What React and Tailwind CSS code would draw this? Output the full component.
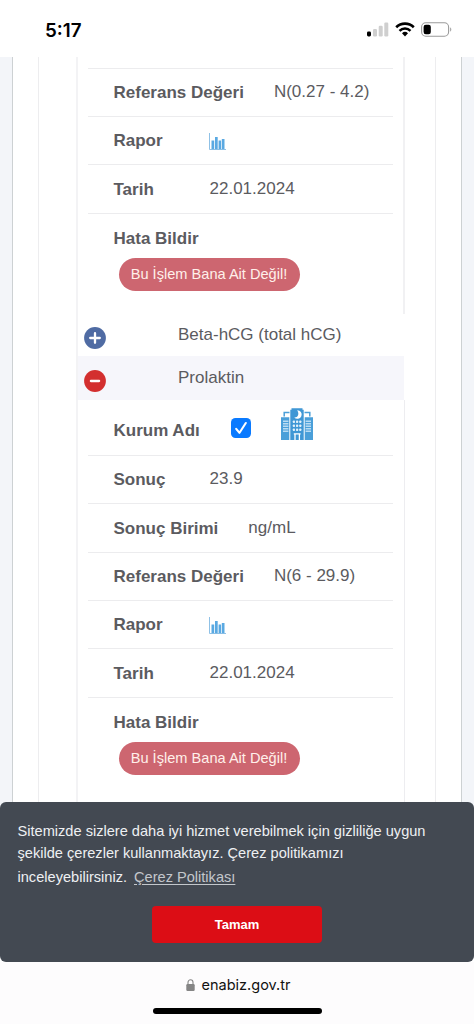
import React from 'react'

const StatusBar = () => (
  <header className="flex h-[57px] items-start justify-between bg-white pl-[45px] pr-[22px] pt-[19px]">
    <span className="font-['Inter',sans-serif] text-[18.8px] font-semibold leading-[23px] text-black">5:17</span>
    <div className="flex items-center gap-[6px] pt-[3px]">
      {/* Signal */}
      <svg width="22" height="15" viewBox="0 0 22 15">
        <rect x="0" y="9.5" width="4" height="5" rx="1.4" fill="#000" />
        <rect x="6" y="7" width="4" height="7.5" rx="1.2" fill="#cfcfcf" />
        <rect x="11.7" y="3.8" width="4" height="10.7" rx="1.2" fill="#cfcfcf" />
        <rect x="17.3" y="0.5" width="4" height="14" rx="1.2" fill="#cfcfcf" />
      </svg>
      {/* Wifi */}
      <svg width="20" height="15" viewBox="0 0 20 15" fill="none" stroke="#000">
        <path d="M1.2 5.2a12.6 12.6 0 0 1 17.6 0" strokeWidth="2.6" />
        <path d="M4.5 8.8a7.9 7.9 0 0 1 11 0" strokeWidth="2.5" />
        <path d="M10 14.4l3-3.1a4.3 4.3 0 0 0-6 0z" fill="#000" stroke="none" />
      </svg>
      {/* Battery */}
      <svg width="31" height="15" viewBox="0 0 31 15">
        <rect x="0.6" y="0.8" width="27" height="13.4" rx="4.2" fill="#fff" stroke="#9b9b9b" strokeWidth="1.1" />
        <rect x="2.6" y="2.7" width="7.2" height="9.6" rx="2.2" fill="#000" />
        <path d="M29.2 5.3c1.5.7 1.5 3.7 0 4.4z" fill="#9b9b9b" />
      </svg>
    </div>
  </header>
)

const ChartIcon = () => (
  <svg width="18" height="18" viewBox="0 0 18 18">
    <path d="M.5 0v16.5H17" fill="none" stroke="#8fc1e6" strokeWidth="1" />
    <g fill="#5aa9e2">
      <rect x="2.5" y="7.5" width="2.7" height="8.6" />
      <rect x="6" y="4" width="2.7" height="12.1" />
      <rect x="9.6" y="7.5" width="2.5" height="8.6" />
      <rect x="12.8" y="6" width="2.7" height="10.1" />
    </g>
  </svg>
)

const HospitalIcon = () => (
  <svg width="32" height="33" viewBox="0 0 32 33">
    <path d="M3.2 8.5V4.6H8.5M28.8 8.5V4.6H23.5" fill="none" stroke="#4a9fd9" strokeWidth="1.5" />
    <path d="M0 9.2h8.3V32H0zM23.7 9.2H32V32h-8.3z" fill="#4a9fd9" />
    <path d="M9.3 1.8h1.2V.3h11v1.5h1.2V32H9.3z" fill="#3f97d5" />
    <g stroke="#b9dcf3" strokeWidth="1.4">
      <path d="M2 13.2h5.4M2 15.7h5.4M2 18.2h5.4M2 20.7h5.4M2 23.2h5.4" />
      <path d="M24.6 13.2h5.4M24.6 15.7h5.4M24.6 18.2h5.4M24.6 20.7h5.4M24.6 23.2h5.4" />
    </g>
    {/* Crescent */}
    <path d="M16.2 2.2a4.3 4.3 0 1 1-3 7.2c3.2.6 5.7-3.2 3-7.2z" fill="#fff" />
    <g fill="#e4f2fb">
      <rect x="11.8" y="12.4" width="2.2" height="2.6" rx=".8" />
      <rect x="15" y="12.4" width="2.2" height="2.6" rx=".8" />
      <rect x="18.2" y="12.4" width="2.2" height="2.6" rx=".8" />
      <rect x="11.8" y="16.4" width="2.2" height="2.6" rx=".8" />
      <rect x="15" y="16.4" width="2.2" height="2.6" rx=".8" />
      <rect x="18.2" y="16.4" width="2.2" height="2.6" rx=".8" />
      <rect x="11.8" y="20.4" width="2.2" height="2.6" rx=".8" />
      <rect x="15" y="20.4" width="2.2" height="2.6" rx=".8" />
      <rect x="18.2" y="20.4" width="2.2" height="2.6" rx=".8" />
    </g>
    <path d="M12.8 25.8h6.8M14 25.8V32M18.4 25.8V32" fill="none" stroke="#fff" strokeWidth="1.3" />
  </svg>
)

const Row = ({ label, children }) => (
  <li className="flex h-[48.4px] items-center border-b border-[#ececee] pl-[25.5px]">
    <b className="mr-[30px] min-w-[66px] whitespace-nowrap pt-px">{label}</b>
    <span className="whitespace-nowrap pb-px">{children}</span>
  </li>
)

const ReportRow = () => (
  <Row label="Rapor">
    <span className="-ml-px block pt-[3px]"><ChartIcon /></span>
  </Row>
)

const ErrorRow = () => (
  <li className="flex flex-col items-start pl-[25.5px] pt-[13px]">
    <b className="leading-6">Hata Bildir</b>
    <button className="ml-[5px] mt-[7.5px] h-[33px] w-[181px] whitespace-nowrap rounded-full bg-[#cd6670] pb-[2px] text-[14.6px] leading-[30px] text-[#fff0ea]">
      Bu İşlem Bana Ait Değil!
    </button>
  </li>
)

const TestRow = ({ name, open }) => (
  <div className={open ? 'flex h-[44px] bg-[#f6f6fb] pl-[5.5px] pt-px' : 'flex h-[42px] pl-[5.5px]'}>
    <svg className="mt-[13px]" width="22" height="22" viewBox="0 0 22 22">
      <circle cx="11" cy="11" r="10.9" fill={open ? '#d32f2f' : '#4f6ba3'} />
      <path
        d={open ? 'M6.9 11h8.2' : 'M6.2 11h9.6M11 6.2v9.6'}
        stroke="#fff"
        strokeWidth="2.3"
        strokeLinecap="round"
      />
    </svg>
    <span className="ml-[72.5px] mt-[9px] leading-6">{name}</span>
  </div>
)

const CookieNotice = () => (
  <section className="relative -mt-2 h-[159.5px] rounded-[6px] bg-[#434952] px-[17.5px] pt-[18px] font-['Liberation_Sans',Arial,sans-serif] text-[#eef0f2]">
    <p className="whitespace-nowrap text-[14.6px] leading-[22px]">
      Sitemizde sizlere daha iyi hizmet verebilmek için gizliliğe uygun
      <br />
      şekilde çerezler kullanmaktayız. Çerez politikamızı
      <br />
      <span className="inline-block pt-[2px]">
        inceleyebilirsiniz.
        <a className="ml-[7px] text-[#c3c7cc] underline underline-offset-2">Çerez Politikası</a>
      </span>
    </p>
    <button className="mx-auto mt-[18px] block h-[37px] w-[170px] rounded-[4px] bg-[#dc0d15] text-[13px] font-bold text-white">
      Tamam
    </button>
  </section>
)

const App = () => {
  return (
    <div className="h-[1024px] w-[474px] overflow-hidden bg-white font-['Liberation_Sans',Arial,sans-serif] text-[17px] text-[#5b5b5f]">
      <StatusBar />

      <main className="flex h-[753px] overflow-hidden bg-[#f3f5f9] pl-[12px] pr-[12px]">
        <div className="flex-1 border-x border-[#cdd1d3] bg-white px-[25px]">
          <div className="h-full border-x border-[#ededef] pl-[37px] pr-[31px]">
            <div className="h-full w-[328px] border-l-2 border-[#f3f3f5]">
              <ul className="h-[257px] w-[327px] border-r-2 border-[#f1f1f3] pl-[10px] pr-[10px]">
                <li className="h-[11.5px] border-b border-[#ececee]" />
                <Row label="Referans Değeri">N(0.27 - 4.2)</Row>
                <ReportRow />
                <Row label="Tarih">22.01.2024</Row>
                <ErrorRow />
              </ul>

              <TestRow name="Beta-hCG (total hCG)" />
              <TestRow name="Prolaktin" open />

              <ul className="h-[420px] w-[327px] border-r border-[#ededf0] pl-[10px] pr-[11px]">
                <li className="flex h-[55.8px] items-start border-b border-[#ececee] pl-[25.5px]">
                  <b className="mt-[18.5px] leading-6">Kurum Adı</b>
                  {/* Checked box */}
                  <svg className="ml-[31px] mt-[18px]" width="20" height="20" viewBox="0 0 20 20">
                    <rect width="20" height="20" rx="4.5" fill="#0a7aff" />
                    <path d="M5.2 10.8l3.3 4L14.8 5" fill="none" stroke="#fff" strokeWidth="2.1" strokeLinecap="round" strokeLinejoin="round" />
                  </svg>
                  <span className="ml-[30px] mt-[8px]"><HospitalIcon /></span>
                </li>
                <Row label="Sonuç">23.9</Row>
                <Row label="Sonuç Birimi">ng/mL</Row>
                <Row label="Referans Değeri">N(6 - 29.9)</Row>
                <ReportRow />
                <Row label="Tarih">22.01.2024</Row>
                <ErrorRow />
              </ul>
            </div>
          </div>
        </div>
      </main>

      <CookieNotice />

      {/* Browser address bar */}
      <footer className="flex h-[62.5px] flex-col items-center bg-[#fdfcfd] pt-[12.5px]">
        <div className="flex items-center gap-[7px] pl-[2px] font-['Inter',sans-serif] text-[14.5px] leading-[22px] text-[#111]">
          <svg width="9" height="12" viewBox="0 0 9 12">
            <rect x=".3" y="5" width="8.4" height="7" rx="1.2" fill="#858585" />
            <path d="M2 5.5V3.3a2.5 2.5 0 0 1 5 0v2.2" fill="none" stroke="#858585" strokeWidth="1.1" />
          </svg>
          enabiz.gov.tr
        </div>
        <div className="mt-[12px] h-[6px] w-[169px] rounded-full bg-black" />
      </footer>
    </div>
  )
}

export default App
